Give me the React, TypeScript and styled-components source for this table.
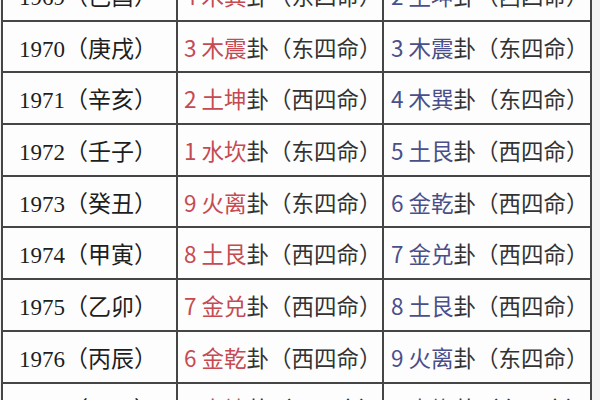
import React from "react";
import styled, { createGlobalStyle } from "styled-components";

const GlobalStyle = createGlobalStyle`
  html, body {
    margin: 0;
    padding: 0;
    background: #f3f3f3;
    overflow: hidden;
  }
`;

type Gua = { num: number; name: string; life: string };
type Row = { year: string; ganzhi: string; male: Gua; female: Gua };

const rows: Row[] = [
  { year: "1969", ganzhi: "己酉", male: { num: 4, name: "木巽", life: "东四命" }, female: { num: 2, name: "土坤", life: "西四命" } },
  { year: "1970", ganzhi: "庚戌", male: { num: 3, name: "木震", life: "东四命" }, female: { num: 3, name: "木震", life: "东四命" } },
  { year: "1971", ganzhi: "辛亥", male: { num: 2, name: "土坤", life: "西四命" }, female: { num: 4, name: "木巽", life: "东四命" } },
  { year: "1972", ganzhi: "壬子", male: { num: 1, name: "水坎", life: "东四命" }, female: { num: 5, name: "土艮", life: "西四命" } },
  { year: "1973", ganzhi: "癸丑", male: { num: 9, name: "火离", life: "东四命" }, female: { num: 6, name: "金乾", life: "西四命" } },
  { year: "1974", ganzhi: "甲寅", male: { num: 8, name: "土艮", life: "西四命" }, female: { num: 7, name: "金兑", life: "西四命" } },
  { year: "1975", ganzhi: "乙卯", male: { num: 7, name: "金兑", life: "西四命" }, female: { num: 8, name: "土艮", life: "西四命" } },
  { year: "1976", ganzhi: "丙辰", male: { num: 6, name: "金乾", life: "西四命" }, female: { num: 9, name: "火离", life: "东四命" } },
  { year: "1977", ganzhi: "丁巳", male: { num: 2, name: "土坤", life: "西四命" }, female: { num: 1, name: "水坎", life: "东四命" } },
];

const Table = styled.div`
  display: grid;
  grid-template-columns: 173px 204px 206px;
  grid-auto-rows: 49.7px;
  gap: 2px;
  padding: 2px;
  width: max-content;
  margin: -32px 0 0 1px;
  background: #454545;
`;

const Cell = styled.div<{ $pad: number }>`
  display: flex;
  align-items: center;
  padding-left: ${(p) => p.$pad}px;
  background: #fdfdfd;
  white-space: nowrap;
  font-size: 22px;
  color: #333;
`;

const YearCell = styled(Cell)`
  font-family: "Liberation Serif", "Noto Sans CJK SC", serif;
  font-size: 23px;
  color: #1e1e1e;
`;

const GuaCell = styled(Cell)`
  font-family: "Noto Sans CJK SC", sans-serif;
  font-size: 22.5px;
`;

const Accent = styled.span<{ $tone: "red" | "blue" }>`
  color: ${(p) => (p.$tone === "red" ? "#c54a52" : "#4a4f8a")};
`;

const GuaText = ({ gua, tone }: { gua: Gua; tone: "red" | "blue" }) => (
  <>
    <Accent $tone={tone}>
      {gua.num} {gua.name}
    </Accent>
    卦（{gua.life}）
  </>
);

export default function App() {
  return (
    <>
      <GlobalStyle />
      <Table>
        {rows.map((r) => (
          <React.Fragment key={r.year}>
            <YearCell $pad={16}>
              {r.year}（{r.ganzhi}）
            </YearCell>
            <GuaCell $pad={6}>
              <GuaText gua={r.male} tone="red" />
            </GuaCell>
            <GuaCell $pad={7}>
              <GuaText gua={r.female} tone="blue" />
            </GuaCell>
          </React.Fragment>
        ))}
      </Table>
    </>
  );
}
